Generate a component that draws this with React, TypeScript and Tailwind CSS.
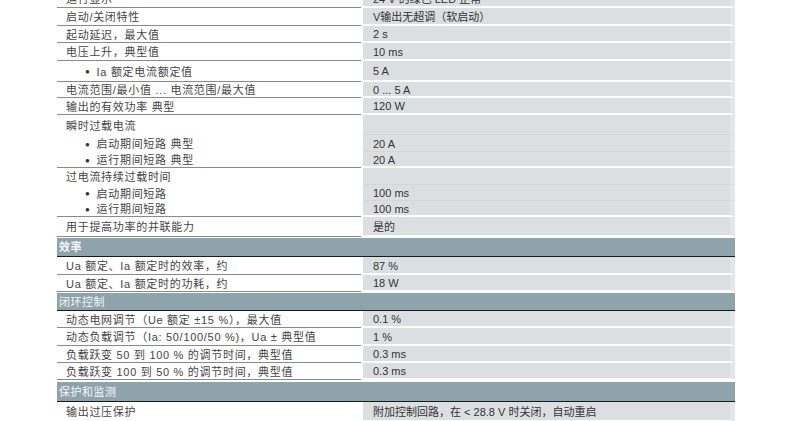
import React from 'react';

type Row = {
  kind?: 'row' | 'header';
  label: string;
  value?: string;
  h: number;
  bullet?: boolean;
  noLine?: boolean;
  bold?: boolean;
  gap?: number;
};

const rows: Row[] = [
  { label: '运行显示', value: '24 V 的绿色 LED 正常', h: 18 },
  { label: '启动/关闭特性', value: 'V输出无超调（软启动）', h: 18 },
  { label: '起动延迟，最大值', value: '2 s', h: 17 },
  { label: '电压上升，典型值', value: '10 ms', h: 18 },
  { label: 'Ia 额定电流额定值', value: '5 A', h: 21, bullet: true },
  { label: '电流范围/最小值 ... 电流范围/最大值', value: '0 ... 5 A', h: 16 },
  { label: '输出的有效功率 典型', value: '120 W', h: 17 },
  { label: '瞬时过载电流', value: '', h: 20, noLine: true },
  { label: '启动期间短路 典型', value: '20 A', h: 17, bullet: true, noLine: true },
  { label: '运行期间短路 典型', value: '20 A', h: 16, bullet: true },
  { label: '过电流持续过载时间', value: '', h: 17, noLine: true },
  { label: '启动期间短路', value: '100 ms', h: 16, bullet: true, noLine: true },
  { label: '运行期间短路', value: '100 ms', h: 16, bullet: true },
  { label: '用于提高功率的并联能力', value: '是的', h: 20 },
  { kind: 'header', label: '效率', h: 19, bold: true, gap: 1 },
  { label: 'Ua 额定、Ia 额定时的效率，约', value: '87 %', h: 18 },
  { label: 'Ua 额定、Ia 额定时的功耗，约', value: '18 W', h: 17 },
  { kind: 'header', label: '闭环控制', h: 18, gap: 1 },
  { label: '动态电网调节（Ue 额定 ±15 %），最大值', value: '0.1 %', h: 17 },
  { label: '动态负载调节（Ia: 50/100/50 %)，Ua ± 典型值', value: '1 %', h: 18 },
  { label: '负载跃变 50 到 100 % 的调节时间，典型值', value: '0.3 ms', h: 17 },
  { label: '负载跃变 100 到 50 % 的调节时间，典型值', value: '0.3 ms', h: 17 },
  { kind: 'header', label: '保护和监测', h: 20, gap: 2 },
  { label: '输出过压保护', value: '附加控制回路，在 < 28.8 V 时关闭，自动重启', h: 20 },
];

const font = { fontFamily: '"Liberation Sans", "Noto Sans CJK SC", sans-serif' };

function TableRow({ row }: { row: Row }) {
  if (row.kind === 'header') {
    return (
      <div
        className={`flex items-center w-[678px] bg-[#8ea3ac] border-b border-[#1a1a1a] pl-[2px] pt-px text-[11px] text-[#f4f6f7] tracking-[0.5px] ${row.bold ? 'font-bold' : ''} ${row.gap === 2 ? 'mt-[2px]' : 'mt-px'}`}
        style={{ height: row.h }}
      >
        {row.label}
      </div>
    );
  }
  return (
    <div className="flex w-[678px]" style={{ height: row.h }}>
      <div
        className={`w-[304px] flex items-center pt-[2px] text-[11px] text-[#444] tracking-[0.7px] ${row.noLine ? '' : 'border-b border-[#8a8a8a]'} ${row.bullet ? 'pl-[28px]' : 'pl-[9px]'}`}
      >
        {row.bullet && <span className="text-[8px] mr-[6px] text-[#333]">●</span>}
        {row.label}
      </div>
      <div
        className={`ml-[2px] flex-1 flex items-center pt-[2px] bg-[#dcdfe2] border-r-[5px] border-r-[#e3e6e8] pl-[10px] text-[11px] text-[#333] ${row.noLine ? 'border-b border-b-[#d4d7da]' : 'border-b-2 border-b-white'}`}
      >
        {row.value}
      </div>
    </div>
  );
}

export default function App() {
  return (
    <div className="w-[793px] h-[421px] bg-white overflow-hidden" style={font}>
      <div className="ml-[57px] mt-[-10px] flex flex-col">
        {rows.map((row, i) => (
          <TableRow key={i} row={row} />
        ))}
      </div>
    </div>
  );
}
